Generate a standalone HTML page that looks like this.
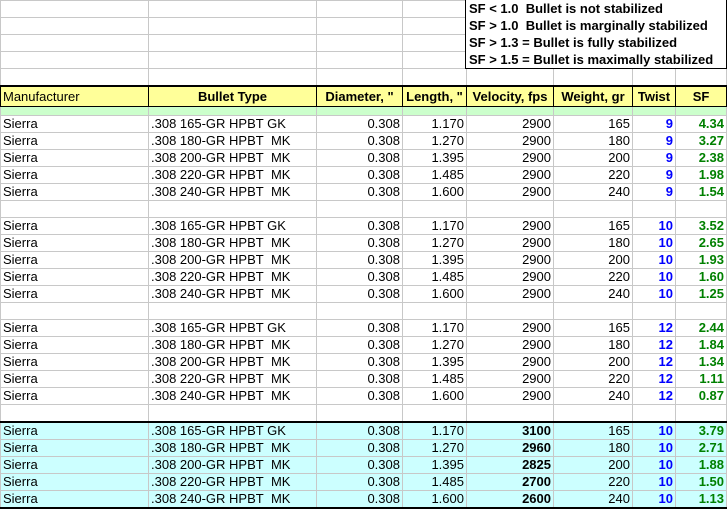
<!DOCTYPE html><html><head><style>
body{margin:0;width:728px;height:508px;background:#fff;overflow:hidden;font-family:"Liberation Sans",Arial,sans-serif;font-size:13px;position:relative}
table{border-collapse:collapse;table-layout:fixed;position:absolute;left:0;top:0}
td{border:1px solid #c8c8c8;height:16px;padding:0 2px;white-space:nowrap;overflow:hidden;line-height:16px}
td.r{text-align:right}
tr.h td{background:#ffff99;font-weight:bold;text-align:center;border:1px solid #000;border-top:2px solid #000;height:19px;font-size:13px}
tr.h td:first-child{text-align:left;font-weight:normal}
tr.g td{background:#ccffcc;height:8px;line-height:8px;border-color:#c8c8c8}
.t{color:#0000ff;font-weight:bold;text-align:right}
.s{color:#008000;font-weight:bold;text-align:right}
tr.c td{background:#ccffff}
tr.c1 td{border-top:2px solid #000}
tr.cl td{border-bottom:2px solid #000}
.b{font-weight:bold}
#leg{position:absolute;left:465px;top:0;width:262px;height:69px;border:1px solid #000;border-top:none;background:#fff;font-weight:bold;font-size:13px;line-height:17px;padding-left:3px;box-sizing:border-box}
</style></head><body>
<table>
<colgroup><col style="width:148px"><col style="width:168px"><col style="width:86px"><col style="width:64px"><col style="width:87px"><col style="width:79px"><col style="width:43px"><col style="width:51px"></colgroup>
<tr><td></td><td></td><td></td><td></td><td></td><td></td><td></td><td></td></tr>
<tr><td></td><td></td><td></td><td></td><td></td><td></td><td></td><td></td></tr>
<tr><td></td><td></td><td></td><td></td><td></td><td></td><td></td><td></td></tr>
<tr><td></td><td></td><td></td><td></td><td></td><td></td><td></td><td></td></tr>
<tr><td></td><td></td><td></td><td></td><td></td><td></td><td></td><td></td></tr>
<tr class="h"><td>Manufacturer</td><td>Bullet Type</td><td>Diameter, "</td><td>Length, "</td><td>Velocity, fps</td><td>Weight, gr</td><td>Twist</td><td>SF</td></tr>
<tr class="g"><td></td><td></td><td></td><td></td><td></td><td></td><td></td><td></td></tr>
<tr><td>Sierra</td><td>.308 165-GR HPBT GK</td><td class="r">0.308</td><td class="r">1.170</td><td class="r">2900</td><td class="r">165</td><td class="t">9</td><td class="s">4.34</td></tr>
<tr><td>Sierra</td><td>.308 180-GR HPBT&nbsp; MK</td><td class="r">0.308</td><td class="r">1.270</td><td class="r">2900</td><td class="r">180</td><td class="t">9</td><td class="s">3.27</td></tr>
<tr><td>Sierra</td><td>.308 200-GR HPBT&nbsp; MK</td><td class="r">0.308</td><td class="r">1.395</td><td class="r">2900</td><td class="r">200</td><td class="t">9</td><td class="s">2.38</td></tr>
<tr><td>Sierra</td><td>.308 220-GR HPBT&nbsp; MK</td><td class="r">0.308</td><td class="r">1.485</td><td class="r">2900</td><td class="r">220</td><td class="t">9</td><td class="s">1.98</td></tr>
<tr><td>Sierra</td><td>.308 240-GR HPBT&nbsp; MK</td><td class="r">0.308</td><td class="r">1.600</td><td class="r">2900</td><td class="r">240</td><td class="t">9</td><td class="s">1.54</td></tr>
<tr><td></td><td></td><td></td><td></td><td></td><td></td><td></td><td></td></tr>
<tr><td>Sierra</td><td>.308 165-GR HPBT GK</td><td class="r">0.308</td><td class="r">1.170</td><td class="r">2900</td><td class="r">165</td><td class="t">10</td><td class="s">3.52</td></tr>
<tr><td>Sierra</td><td>.308 180-GR HPBT&nbsp; MK</td><td class="r">0.308</td><td class="r">1.270</td><td class="r">2900</td><td class="r">180</td><td class="t">10</td><td class="s">2.65</td></tr>
<tr><td>Sierra</td><td>.308 200-GR HPBT&nbsp; MK</td><td class="r">0.308</td><td class="r">1.395</td><td class="r">2900</td><td class="r">200</td><td class="t">10</td><td class="s">1.93</td></tr>
<tr><td>Sierra</td><td>.308 220-GR HPBT&nbsp; MK</td><td class="r">0.308</td><td class="r">1.485</td><td class="r">2900</td><td class="r">220</td><td class="t">10</td><td class="s">1.60</td></tr>
<tr><td>Sierra</td><td>.308 240-GR HPBT&nbsp; MK</td><td class="r">0.308</td><td class="r">1.600</td><td class="r">2900</td><td class="r">240</td><td class="t">10</td><td class="s">1.25</td></tr>
<tr><td></td><td></td><td></td><td></td><td></td><td></td><td></td><td></td></tr>
<tr><td>Sierra</td><td>.308 165-GR HPBT GK</td><td class="r">0.308</td><td class="r">1.170</td><td class="r">2900</td><td class="r">165</td><td class="t">12</td><td class="s">2.44</td></tr>
<tr><td>Sierra</td><td>.308 180-GR HPBT&nbsp; MK</td><td class="r">0.308</td><td class="r">1.270</td><td class="r">2900</td><td class="r">180</td><td class="t">12</td><td class="s">1.84</td></tr>
<tr><td>Sierra</td><td>.308 200-GR HPBT&nbsp; MK</td><td class="r">0.308</td><td class="r">1.395</td><td class="r">2900</td><td class="r">200</td><td class="t">12</td><td class="s">1.34</td></tr>
<tr><td>Sierra</td><td>.308 220-GR HPBT&nbsp; MK</td><td class="r">0.308</td><td class="r">1.485</td><td class="r">2900</td><td class="r">220</td><td class="t">12</td><td class="s">1.11</td></tr>
<tr><td>Sierra</td><td>.308 240-GR HPBT&nbsp; MK</td><td class="r">0.308</td><td class="r">1.600</td><td class="r">2900</td><td class="r">240</td><td class="t">12</td><td class="s">0.87</td></tr>
<tr><td></td><td></td><td></td><td></td><td></td><td></td><td></td><td></td></tr>
<tr class="c c1"><td>Sierra</td><td>.308 165-GR HPBT GK</td><td class="r">0.308</td><td class="r">1.170</td><td class="r b">3100</td><td class="r">165</td><td class="t">10</td><td class="s">3.79</td></tr>
<tr class="c"><td>Sierra</td><td>.308 180-GR HPBT&nbsp; MK</td><td class="r">0.308</td><td class="r">1.270</td><td class="r b">2960</td><td class="r">180</td><td class="t">10</td><td class="s">2.71</td></tr>
<tr class="c"><td>Sierra</td><td>.308 200-GR HPBT&nbsp; MK</td><td class="r">0.308</td><td class="r">1.395</td><td class="r b">2825</td><td class="r">200</td><td class="t">10</td><td class="s">1.88</td></tr>
<tr class="c"><td>Sierra</td><td>.308 220-GR HPBT&nbsp; MK</td><td class="r">0.308</td><td class="r">1.485</td><td class="r b">2700</td><td class="r">220</td><td class="t">10</td><td class="s">1.50</td></tr>
<tr class="c cl"><td>Sierra</td><td>.308 240-GR HPBT&nbsp; MK</td><td class="r">0.308</td><td class="r">1.600</td><td class="r b">2600</td><td class="r">240</td><td class="t">10</td><td class="s">1.13</td></tr>
</table>
<div id="leg">SF &lt; 1.0&nbsp; Bullet is not stabilized<br>SF &gt; 1.0&nbsp; Bullet is marginally stabilized<br>SF &gt; 1.3 = Bullet is fully stabilized<br>SF &gt; 1.5 = Bullet is maximally stabilized</div>
</body></html>
